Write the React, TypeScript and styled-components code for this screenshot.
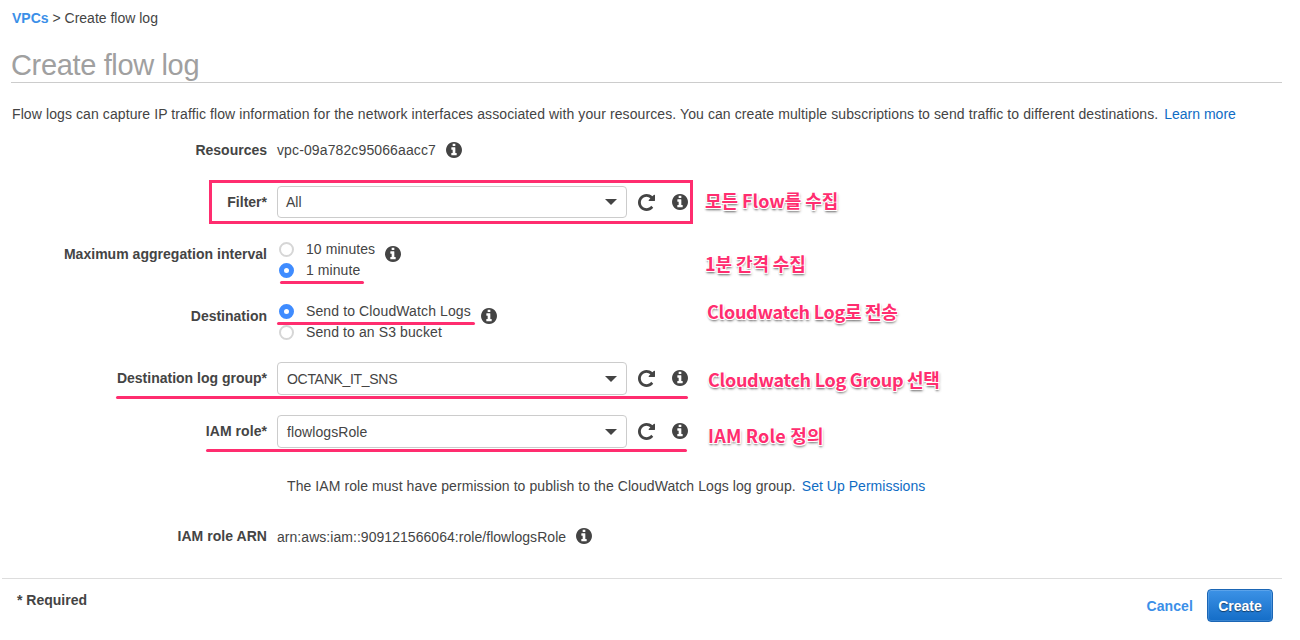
import React from "react";
import styled, { createGlobalStyle } from "styled-components";

const PINK = "#ff2d6f";

const GlobalStyle = createGlobalStyle`
  * { box-sizing: border-box; }
  body {
    margin: 0;
    background: #fff;
    color: #444;
    font: 14px/20px "Liberation Sans", Arial, Helvetica, sans-serif;
  }
`;

const Page = styled.main`
  width: 1300px;
  height: 640px;
  overflow: hidden;
  display: flex;
  flex-direction: column;
`;

const Text = styled.span<{ $spacing?: number }>`
  white-space: nowrap;
  letter-spacing: ${(p) => p.$spacing ?? 0}px;
`;

const Breadcrumb = styled.nav`
  height: 40px;
  padding: 8px 12px 0;
  white-space: nowrap;
`;

const Link = styled.a<{ $strong?: boolean; $spacing?: number }>`
  color: ${(p) => (p.$strong ? "#3b8fe8" : "#0f6cc4")};
  font-weight: ${(p) => (p.$strong ? 700 : 400)};
  letter-spacing: ${(p) => p.$spacing ?? 0}px;
  text-decoration: none;
  white-space: nowrap;
`;

const Title = styled.h1`
  height: 43px;
  margin: 0 18px 0 11px;
  padding-top: 8px;
  border-bottom: 1px solid #ccc;
  color: #a0a0a0;
  font-size: 29px;
  line-height: 34px;
  font-weight: 400;
  letter-spacing: -0.35px;
`;

const Intro = styled.p`
  display: flex;
  gap: 6px;
  height: 50px;
  margin: 0;
  padding: 21px 12px 0;
`;

const Row = styled.div<{ $height: number }>`
  position: relative;
  display: grid;
  grid-template-columns: 267px 418px 1fr;
  column-gap: 10px;
  height: ${(p) => p.$height}px;
`;

const Label = styled.label<{ $top: number; $spacing?: number }>`
  padding-top: ${(p) => p.$top}px;
  text-align: right;
  font-weight: 700;
  white-space: nowrap;
  letter-spacing: ${(p) => p.$spacing ?? 0}px;
`;

const Field = styled.div<{ $top?: number; $gap?: number }>`
  display: flex;
  align-items: flex-start;
  gap: ${(p) => p.$gap ?? 10}px;
  padding-top: ${(p) => p.$top ?? 0}px;
`;

const IconBox = styled.svg<{ $size: number; $top?: number }>`
  flex: none;
  display: block;
  width: ${(p) => p.$size}px;
  height: ${(p) => p.$size}px;
  margin-top: ${(p) => p.$top ?? 0}px;
  fill: #444;
`;

const InfoIcon = ({ top = 2 }: { top?: number }) => (
  <IconBox $size={16} $top={top} viewBox="128 128 1536 1536">
    <path d="M1152 1376v-160q0-14-9-23t-23-9h-96v-512q0-14-9-23t-23-9h-320q-14 0-23 9t-9 23v160q0 14 9 23t23 9h96v320h-96q-14 0-23 9t-9 23v160q0 14 9 23t23 9h448q14 0 23-9t9-23zm-128-896v-160q0-14-9-23t-23-9h-192q-14 0-23 9t-9 23v160q0 14 9 23t23 9h192q14 0 23-9t9-23zm640 416q0 209-103 385.5t-279.5 279.5-385.5 103-385.5-103-279.5-279.5-103-385.5 103-385.5 279.5-279.5 385.5-103 385.5 103 279.5 279.5 103 385.5z" />
  </IconBox>
);

const RefreshIcon = () => (
  <IconBox $size={17} $top={8} viewBox="128 128 1536 1536">
    <path d="M1664 256v448q0 26-19 45t-45 19h-448q-42 0-59-40-17-39 14-69l138-138q-148-137-349-137-104 0-198.5 40.5t-163.5 109.5-109.5 163.5-40.5 198.5 40.5 198.5 109.5 163.5 163.5 109.5 198.5 40.5q119 0 225-52t179-147q7-10 23-12 15 0 25 9l137 138q9 8 9.5 20.5t-7.5 22.5q-109 132-264 204.5t-327 72.5q-156 0-298-61t-245-164-164-245-61-298 61-298 164-245 245-164 298-61q147 0 284.5 55.5t244.5 156.5l130-129q29-31 70-14 39 17 39 59z" />
  </IconBox>
);

const SelectBox = styled.div<{ $height: number; $indent: number }>`
  display: flex;
  align-items: center;
  justify-content: space-between;
  width: 350px;
  height: ${(p) => p.$height}px;
  padding: 0 9px 0 ${(p) => p.$indent}px;
  border: 1px solid #ccc;
  border-radius: 4px;
`;

const Caret = styled.i`
  border: 6px solid transparent;
  border-top-color: #444;
  border-bottom: 0;
`;

const Actions = styled.div`
  display: flex;
  gap: 17px;
`;

interface SelectProps {
  value: string;
  height?: number;
  indent?: number;
  spacing?: number;
}

const Select = ({ value, height = 33, indent = 9, spacing }: SelectProps) => (
  <Field $gap={11}>
    <SelectBox $height={height} $indent={indent}>
      <Text $spacing={spacing}>{value}</Text>
      <Caret />
    </SelectBox>
    <Actions>
      <RefreshIcon />
      <InfoIcon top={8} />
    </Actions>
  </Field>
);

const Options = styled.div`
  display: flex;
  flex-direction: column;
`;

const Option = styled.div`
  display: flex;
  align-items: flex-start;
  gap: 12px;
  height: 21px;
  padding-left: 2px;
  line-height: 21px;
`;

const Radio = styled.span<{ $checked?: boolean }>`
  width: 15px;
  height: 15px;
  margin-top: 3px;
  border: ${(p) => (p.$checked ? "5px solid #3f8cff" : "2px solid #d6d6d6")};
  border-radius: 50%;
  background: #fff;
`;

const Note = styled.strong<{ $top: number; $left?: number; $spacing?: number }>`
  margin-top: ${(p) => p.$top}px;
  padding-left: ${(p) => p.$left ?? 0}px;
  color: ${PINK};
  font: 700 18px/24px "Noto Sans CJK KR", sans-serif;
  letter-spacing: ${(p) => p.$spacing ?? 0}px;
  white-space: nowrap;
  text-shadow: -1px -1px 0 #fff, 1px -1px 0 #fff, -1px 1px 0 #fff, 1px 1px 0 #fff,
    0 2px 2px rgba(0, 0, 0, 0.4), 1px 2px 3px rgba(0, 0, 0, 0.3);
`;

const Underline = styled.span<{ $left: number; $top: number; $width: number }>`
  position: absolute;
  left: ${(p) => p.$left}px;
  top: ${(p) => p.$top}px;
  width: ${(p) => p.$width}px;
  height: 3px;
  border-radius: 2px;
  background: ${PINK};
`;

const Highlight = styled.span`
  position: absolute;
  left: 209px;
  top: -6px;
  width: 484px;
  height: 44px;
  border: 3px solid ${PINK};
`;

const Help = styled.div`
  display: flex;
  gap: 6px;
  height: 50px;
  padding: 8px 0 0 287px;
`;

const Footer = styled.footer`
  display: flex;
  justify-content: space-between;
  margin: 0 18px 0 2px;
  padding: 10px 9px 0 15px;
  border-top: 1px solid #ddd;
`;

const Required = styled.strong`
  padding-top: 1px;
`;

const Buttons = styled.div`
  display: flex;
  align-items: center;
  gap: 14px;
`;

const CreateButton = styled.button`
  width: 66px;
  height: 33px;
  padding: 0;
  border: 1px solid #1b66b5;
  border-radius: 4px;
  background: linear-gradient(#3c92e6, #146dc7);
  box-shadow: inset 0 0 0 1px rgba(255, 255, 255, 0.16);
  color: #fff;
  font: 700 14px/20px "Liberation Sans", Arial, sans-serif;
  text-shadow: 0 1px 1px rgba(0, 0, 0, 0.5);
`;

export default function App() {
  return (
    <Page>
      <GlobalStyle />
      <Breadcrumb>
        <Link $strong>VPCs</Link> <Text>&gt; Create flow log</Text>
      </Breadcrumb>
      <Title>Create flow log</Title>
      <Intro>
        <Text $spacing={0.096}>
          Flow logs can capture IP traffic flow information for the network interfaces associated with your
          resources. You can create multiple subscriptions to send traffic to different destinations.
        </Text>
        <Link>Learn more</Link>
      </Intro>

      <Row $height={53}>
        <Label $top={7}>Resources</Label>
        <Field $top={7}>
          <Text $spacing={0.12}>vpc-09a782c95066aacc7</Text>
          <InfoIcon />
        </Field>
      </Row>

      <Row $height={53}>
        <Label $top={6}>Filter*</Label>
        <Select value="All" height={32} indent={8} />
        <Note $top={2} $spacing={-0.05}>모든 Flow를 수집</Note>
        <Highlight />
      </Row>

      <Row $height={62}>
        <Label $top={5} $spacing={0.03}>Maximum aggregation interval</Label>
        <Field>
          <Options>
            <Option>
              <Radio />
              <Text $spacing={0.07}>10 minutes</Text>
            </Option>
            <Option>
              <Radio $checked />
              <Text $spacing={0.07}>1 minute</Text>
            </Option>
          </Options>
          <InfoIcon top={7} />
        </Field>
        <Note $top={12} $spacing={-0.1}>1분 간격 수집</Note>
        <Underline $left={280} $top={42} $width={84} />
      </Row>

      <Row $height={61}>
        <Label $top={5}>Destination</Label>
        <Field>
          <Options>
            <Option>
              <Radio $checked />
              <Text $spacing={0.12}>Send to CloudWatch Logs</Text>
            </Option>
            <Option>
              <Radio />
              <Text $spacing={0.1}>Send to an S3 bucket</Text>
            </Option>
          </Options>
          <InfoIcon top={7} />
        </Field>
        <Note $top={-2} $left={2} $spacing={-0.28}>Cloudwatch Log로 전송</Note>
        <Underline $left={277} $top={21} $width={198} />
      </Row>

      <Row $height={53}>
        <Label $top={6}>Destination log group*</Label>
        <Select value="OCTANK_IT_SNS" spacing={-0.3} />
        <Note $top={5} $left={3} $spacing={-0.28}>Cloudwatch Log Group 선택</Note>
        <Underline $left={116} $top={34} $width={572} />
      </Row>

      <Row $height={53}>
        <Label $top={6} $spacing={0.05}>IAM role*</Label>
        <Select value="flowlogsRole" spacing={0.08} />
        <Note $top={8} $left={3} $spacing={0.2}>IAM Role 정의</Note>
        <Underline $left={206} $top={34} $width={481} />
      </Row>

      <Help>
        <Text $spacing={0.075}>The IAM role must have permission to publish to the CloudWatch Logs log group.</Text>
        <Link $spacing={0.03}>Set Up Permissions</Link>
      </Help>

      <Row $height={60}>
        <Label $top={8} $spacing={0.05}>IAM role ARN</Label>
        <Field $top={9}>
          <Text $spacing={0.045}>arn:aws:iam::909121566064:role/flowlogsRole</Text>
          <InfoIcon top={1} />
        </Field>
      </Row>

      <Footer>
        <Required>* Required</Required>
        <Buttons>
          <Link $strong $spacing={0.1}>Cancel</Link>
          <CreateButton>Create</CreateButton>
        </Buttons>
      </Footer>
    </Page>
  );
}
